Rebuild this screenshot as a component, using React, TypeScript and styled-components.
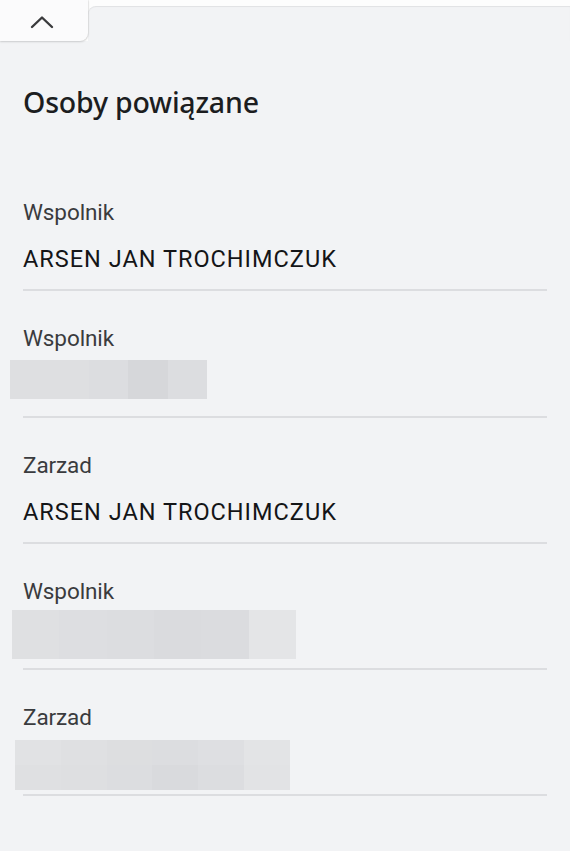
import React from "react";
import styled, { createGlobalStyle } from "styled-components";

const Global = createGlobalStyle`
  html, body { margin: 0; padding: 0; background: #f2f3f5; }
  body { font-family: Roboto, "Noto Sans", sans-serif; -webkit-font-smoothing: antialiased; }
`;

const Page = styled.div`
  width: 570px;
  min-height: 851px;
  background: #f2f3f5;
`;

const HeaderRow = styled.div`
  display: flex;
  background: #fdfdfd;
  height: 41px;
`;

const Tab = styled.button`
  width: 88px;
  height: 41px;
  border: none;
  padding: 0;
  background: #fbfbfc;
  border-radius: 0 0 8px 0;
  box-shadow: 0 1px 2px rgba(0, 0, 0, 0.16), 1px 0 1px rgba(0, 0, 0, 0.06);
  display: flex;
  align-items: center;
  justify-content: center;
  position: relative;
  z-index: 1;
  svg { margin-left: -4px; margin-top: 2px; }
`;

const Rest = styled.div`
  flex: 1;
  margin-top: 6px;
  background: #f2f3f5;
  border-top-left-radius: 8px;
  box-shadow: inset 0 1px 1px rgba(0, 0, 0, 0.07);
`;

const Content = styled.div`
  padding: 0 23px;
`;

const Title = styled.h2`
  margin: 0;
  padding: 42px 0 0;
  font-family: "Noto Sans", sans-serif;
  font-weight: 500;
  font-size: 28.5px;
  line-height: 38px;
  color: #1c1d1f;
  letter-spacing: -0.2px;
`;

const List = styled.div`
  margin-top: 44px;
  display: flex;
  flex-direction: column;
`;

const Item = styled.div`
  height: 126.3px;
  box-sizing: border-box;
  padding-top: 33px;
  border-bottom: 2px solid #dcdde0;
  display: flex;
  flex-direction: column;
`;

const Label = styled.div`
  font-size: 22.5px;
  line-height: 28px;
  color: #3a3b3e;
  font-weight: 400;
  letter-spacing: -0.1px;
`;

const Name = styled.div`
  margin-top: 19px;
  font-size: 23.5px;
  line-height: 28px;
  color: #141517;
  letter-spacing: 1px;
`;

const Hidden = styled.div<{ $w: number; $h: number; $dx: number; $top: number }>`
  margin-top: ${(p) => p.$top}px;
  margin-left: ${(p) => p.$dx}px;
  width: ${(p) => p.$w}px;
  height: ${(p) => p.$h}px;
  display: flex;
  flex-direction: column;
`;

const Strip = styled.div`
  flex: 1;
  display: flex;
`;

const Cell = styled.div<{ $c: string }>`
  flex: 1;
  background: ${(p) => p.$c};
`;

type Person = {
  role: string;
  name?: string;
  hidden?: { w: number; h: number; dx: number; top: number; rows: string[][] };
};

const people: Person[] = [
  { role: "Wspolnik", name: "ARSEN JAN TROCHIMCZUK" },
  {
    role: "Wspolnik",
    hidden: {
      w: 197, h: 39, dx: -13, top: 8,
      rows: [["#dedfe1", "#dedfe1", "#dcdde0", "#d6d7da", "#dcdde0"]],
    },
  },
  { role: "Zarzad", name: "ARSEN JAN TROCHIMCZUK" },
  {
    role: "Wspolnik",
    hidden: {
      w: 284, h: 49, dx: -11, top: 5,
      rows: [["#dfe0e2", "#dddee1", "#dcdde0", "#dadbde", "#dbdcdf", "#e4e5e7"]],
    },
  },
  {
    role: "Zarzad",
    hidden: {
      w: 275, h: 50, dx: -8, top: 9,
      rows: [
        ["#e1e2e4", "#dfe0e2", "#dddee0", "#dcdde0", "#dedfe2", "#e3e4e6"],
        ["#dfe0e2", "#dedfe1", "#dcdde0", "#d9dadd", "#dcdde0", "#e2e3e5"],
      ],
    },
  },
];

const ChevronUp = () => (
  <svg width="24" height="14" viewBox="0 0 24 14" fill="none">
    <path d="M2 12 L12 2.5 L22 12" stroke="#3a3b3d" strokeWidth="2.4" strokeLinecap="round" strokeLinejoin="round" />
  </svg>
);

export default function App() {
  return (
    <Page>
      <Global />
      <HeaderRow>
        <Tab aria-label="Zwiń">
          <ChevronUp />
        </Tab>
        <Rest />
      </HeaderRow>
      <Content>
        <Title>Osoby powiązane</Title>
        <List>
          {people.map((p, i) => (
            <Item key={i}>
              <Label>{p.role}</Label>
              {p.name && <Name>{p.name}</Name>}
              {p.hidden && (
                <Hidden $w={p.hidden.w} $h={p.hidden.h} $dx={p.hidden.dx} $top={p.hidden.top}>
                  {p.hidden.rows.map((r, j) => (
                    <Strip key={j}>
                      {r.map((c, k) => (
                        <Cell key={k} $c={c} />
                      ))}
                    </Strip>
                  ))}
                </Hidden>
              )}
            </Item>
          ))}
        </List>
      </Content>
    </Page>
  );
}
